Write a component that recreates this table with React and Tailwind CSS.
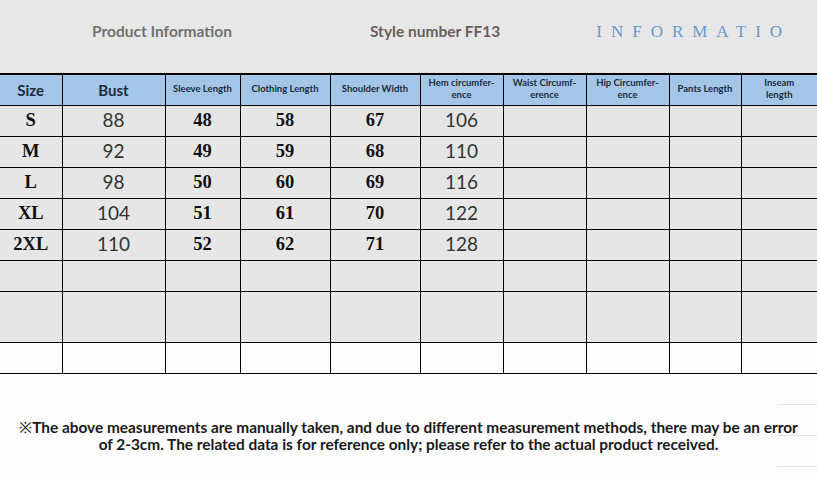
import React from 'react';

const heads = [
  { label: 'Size', big: true },
  { label: 'Bust', big: true },
  { label: 'Sleeve Length' },
  { label: 'Clothing Length' },
  { label: 'Shoulder Width' },
  { label: 'Hem circumfer-', l2: 'ence' },
  { label: 'Waist Circumf-', l2: 'erence' },
  { label: 'Hip Circumfer-', l2: 'ence' },
  { label: 'Pants Length' },
  { label: 'Inseam', l2: 'length' },
];

const widths = [62, 103, 75, 90, 90, 83, 83, 83, 72, 76];

const rows = [
  ['S', '88', '48', '58', '67', '106'],
  ['M', '92', '49', '59', '68', '110'],
  ['L', '98', '50', '60', '69', '116'],
  ['XL', '104', '51', '61', '70', '122'],
  ['2XL', '110', '52', '62', '71', '128'],
];

const lato = { fontFamily: 'Lato, "Open Sans", sans-serif' };
const serif = { fontFamily: '"Liberation Serif", serif' };

function Cell({ i, children, className = '' }) {
  // outer edges have no border
  const edge = i === 0 ? 'border-l-0' : i === widths.length - 1 ? 'border-r-0' : '';
  return (
    <td className={`border border-black p-0 text-center align-middle ${edge} ${className}`}>
      {children}
    </td>
  );
}

export default function App() {
  return (
    <div className="w-[817px] h-[480px] overflow-hidden bg-[#fdfdfd]" style={lato}>
      {/* Top title strip */}
      <div className="h-[73px] bg-[#e7e7e7] flex items-center pb-[10px] text-[15.5px] font-bold">
        <span className="ml-[92px] text-[#727272]">Product Information</span>
        <span className="ml-[138px] text-[#6c5d59]">Style number FF13</span>
        <span className="ml-[96px] text-[17px] font-normal tracking-[9px] text-[#6a98cc]" style={serif}>
          INFORMATIO
        </span>
      </div>

      {/* Size table */}
      <table className="table-fixed border-collapse w-[817px] bg-[#e6e6e6]">
        <colgroup>
          {widths.map((w, i) => (
            <col key={i} style={{ width: w }} />
          ))}
        </colgroup>
        <thead>
          <tr className="h-[31px] bg-[#a2c5e8] text-[#1d2c3c]">
            {heads.map((h, i) => (
              <Cell key={i} i={i} className="border-t-2">
                {h.big ? (
                  <span className="text-[15px] font-bold">{h.label}</span>
                ) : (
                  <div className="text-[9.5px] font-bold leading-[12px] pb-[2px]">
                    <div>{h.label}</div>
                    {h.l2 && <div>{h.l2}</div>}
                  </div>
                )}
              </Cell>
            ))}
          </tr>
        </thead>
        <tbody>
          {rows.map((r, ri) => (
            <tr key={ri} className="h-[31px]">
              {widths.map((_, i) => {
                const v = r[i];
                const sans = i === 1 || i === 5;
                return (
                  <Cell key={i} i={i}>
                    {v && (
                      <span
                        className={
                          sans
                            ? 'text-[19px] text-[#333333]'
                            : 'text-[18.5px] font-bold text-[#111111]'
                        }
                        style={sans ? lato : serif}
                      >
                        {v}
                      </span>
                    )}
                  </Cell>
                );
              })}
            </tr>
          ))}
          <tr className="h-[31px]">
            {widths.map((_, i) => <Cell key={i} i={i} />)}
          </tr>
          <tr className="h-[51px]">
            {widths.map((_, i) => <Cell key={i} i={i} />)}
          </tr>
          <tr className="h-[31px] bg-[#fdfdfd]">
            {widths.map((_, i) => <Cell key={i} i={i} />)}
          </tr>
        </tbody>
      </table>

      {/* Note */}
      <div className="relative h-[108px]">
        <p className="pt-[45px] text-center text-[15.4px] font-bold leading-[17px] text-[#1a1a1a]">
          <span className="font-normal">※</span>The above measurements are manually taken, and due to different measurement methods, there may be an error
          <br />
          of 2-3cm. The related data is for reference only; please refer to the actual product received.
        </p>
        <div className="absolute right-0 top-[30px] w-[40px] border-t border-[#e2e2e2]" />
        <div className="absolute right-0 top-[61px] w-[40px] border-t border-[#e2e2e2]" />
        <div className="absolute right-0 top-[92px] w-[40px] border-t border-[#e2e2e2]" />
      </div>
    </div>
  );
}
